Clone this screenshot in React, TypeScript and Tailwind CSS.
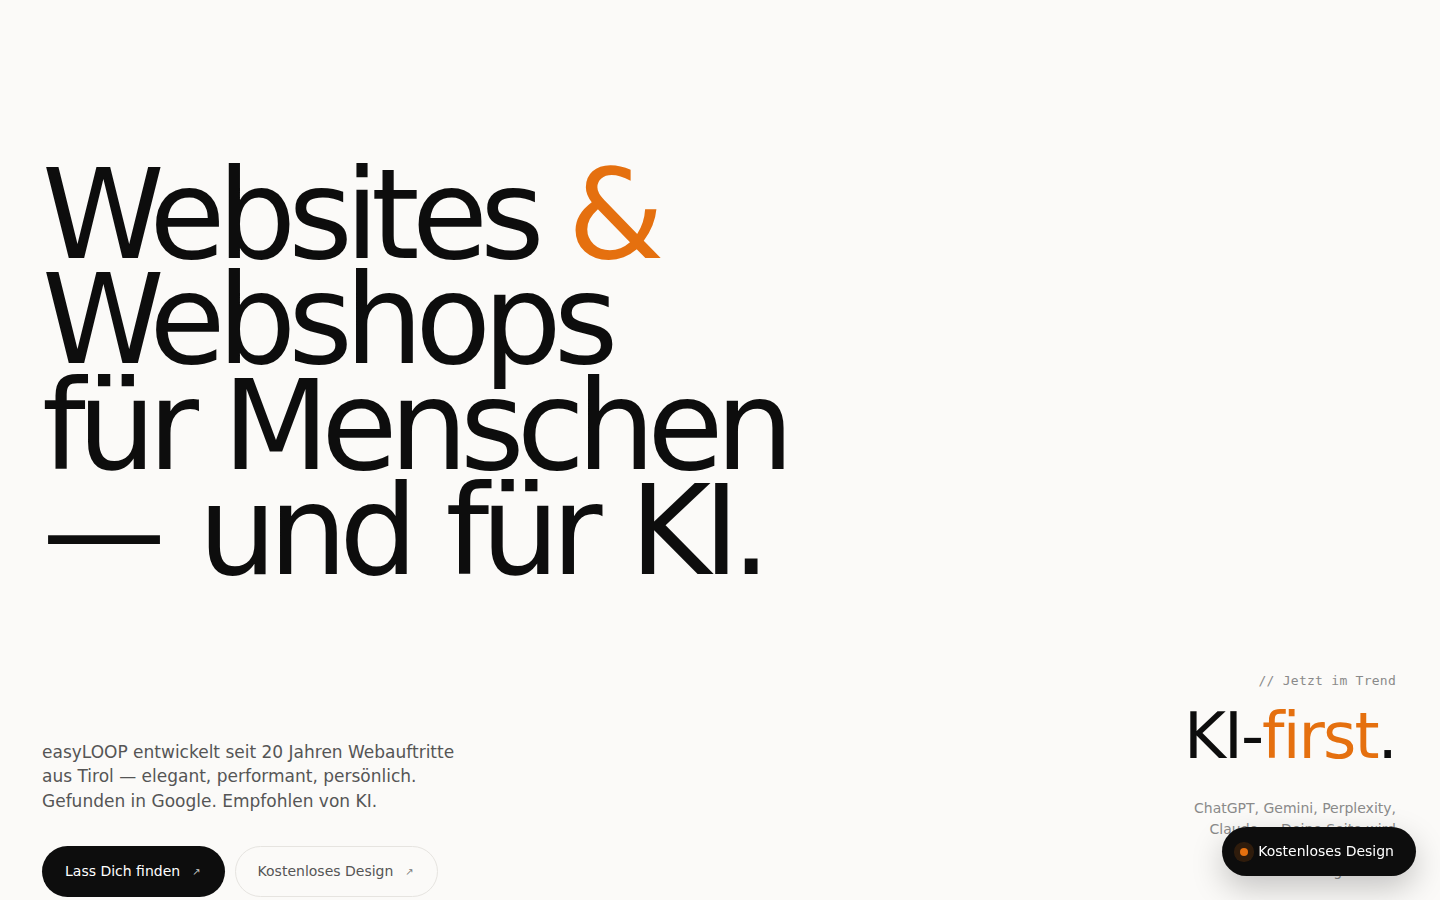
import React from 'react';

function ArrowUpRight({ className = '' }: { className?: string }) {
  return <span className={`text-[10px] leading-none ${className}`}>↗</span>;
}

export default function App() {
  return (
    <div className="min-h-screen bg-[#fbfaf8] font-['DejaVu_Sans',sans-serif] text-[#0d0d0d]">
      <section className="pl-[42px] pr-[44px] pt-[163px] pb-10">
        <h1 className="text-[124px] font-normal leading-[0.85] tracking-[-0.065em]">
          <span className="block">
            Websites <span className="text-[#e5700f]">&amp;</span>
          </span>
          <span className="block">Webshops</span>
          <span className="block">für Menschen</span>
          <span className="block [word-spacing:4px]">
            <span className="mr-[5px]">—</span> und für KI.
          </span>
        </h1>

        <div className="mt-[86px] flex items-start justify-between">
          <div className="mt-[69px]">
            <p className="max-w-[440px] text-[17px] leading-[1.45] text-[#555]">
              easyLOOP entwickelt seit 20 Jahren Webauftritte aus Tirol — elegant, performant, persönlich.
              Gefunden in Google. Empfohlen von KI.
            </p>
            <div className="mt-[33px] flex items-center gap-[10px]">
              <a className="flex items-center gap-3 rounded-full bg-[#0d0d0d] py-[15px] pl-[23px] pr-[24px] text-[14px] leading-[21px] text-white">
                Lass Dich finden
                <ArrowUpRight className="text-[#cfcfcf]" />
              </a>
              <a className="flex items-center gap-3 rounded-full border border-[#e6e4e0] py-[14px] pl-[22px] pr-[23px] text-[14px] leading-[21px] text-[#555]">
                Kostenloses Design
                <ArrowUpRight className="text-[#777]" />
              </a>
            </div>
          </div>

          <div className="flex flex-col items-end text-right">
            <p className="font-['DejaVu_Sans_Mono',monospace] text-[13px] leading-[20px] tracking-[0.02em] text-[#8a8a8a]">
              // Jetzt im Trend
            </p>
            <p className="mt-[13px] text-[64px] leading-none tracking-[-0.03em] text-[#0d0d0d]">
              KI-<span className="text-[#e5700f]">first</span>.
            </p>
            <p className="mt-[30px] max-w-[210px] text-[14px] leading-[21px] text-[#8a8a8a]">
              ChatGPT, Gemini, Perplexity, Claude — Deine Seite wird von KI verstanden und genannt.
            </p>
          </div>
        </div>
      </section>

      <a className="fixed bottom-6 right-6 flex items-center gap-[10px] rounded-full bg-[#0d0d0d] py-[14px] pl-[18px] pr-[22px] text-[14px] leading-[21px] text-white shadow-[0_12px_32px_rgba(0,0,0,0.22)]">
        <span className="h-2 w-2 rounded-full bg-[#e5700f] shadow-[0_0_0_6px_rgba(229,112,15,0.16)]" />
        Kostenloses Design
      </a>
    </div>
  );
}
